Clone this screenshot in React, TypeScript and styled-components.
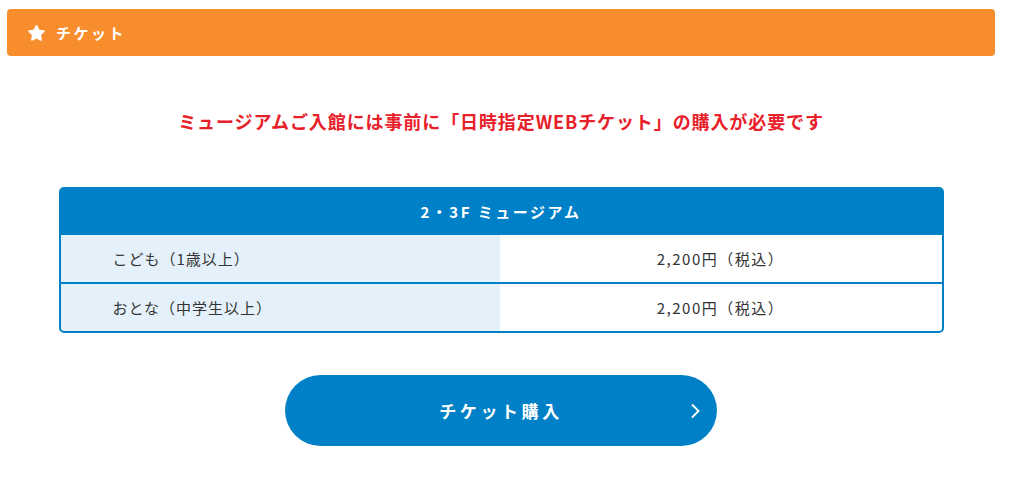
import styled, { createGlobalStyle } from "styled-components";

const GlobalStyle = createGlobalStyle`
  html, body {
    margin: 0;
    padding: 0;
    background: #ffffff;
  }
  body {
    font-family: "Noto Sans CJK JP", "Noto Sans", sans-serif;
    color: #333333;
  }
`;

const Page = styled.div`
  width: 988px;
  margin-left: 7px;
  padding-top: 9px;
  display: flex;
  flex-direction: column;
  align-items: center;
`;

const SectionBar = styled.div`
  box-sizing: border-box;
  width: 100%;
  height: 47px;
  background: #f78d2d;
  border-radius: 4px;
  display: flex;
  align-items: center;
  gap: 10px;
  padding-left: 20px;
  color: #ffffff;
  font-size: 15px;
  font-weight: 700;
  letter-spacing: 2.5px;
`;

const Notice = styled.p`
  margin: 52px 0 0;
  color: #e8202a;
  font-size: 18px;
  font-weight: 700;
  line-height: 26px;
  letter-spacing: 0.9px;
`;

const PriceTable = styled.div`
  box-sizing: border-box;
  width: 885px;
  margin-top: 53px;
  border: 2px solid #0080c6;
  border-radius: 5px;
  overflow: hidden;
  display: flex;
  flex-direction: column;
  gap: 2px;
  background: #0080c6;
`;

const TableHead = styled.div`
  height: 44px;
  display: flex;
  align-items: center;
  justify-content: center;
  color: #ffffff;
  font-size: 15px;
  font-weight: 700;
  letter-spacing: 2.5px;
`;

const TableRow = styled.div`
  display: grid;
  grid-template-columns: 439px 1fr;
  height: 47px;
`;

const Cell = styled.div<{ $label?: boolean }>`
  display: flex;
  align-items: center;
  justify-content: ${(p) => (p.$label ? "flex-start" : "center")};
  padding-left: ${(p) => (p.$label ? "52px" : "0")};
  background: ${(p) => (p.$label ? "#e4f1fa" : "#ffffff")};
  font-size: 15px;
  color: #333333;
  letter-spacing: ${(p) => (p.$label ? "1px" : "1.5px")};
`;

const BuyButton = styled.a`
  box-sizing: border-box;
  position: relative;
  width: 432px;
  height: 71px;
  margin-top: 42px;
  border-radius: 36px;
  background: #0080c6;
  display: flex;
  align-items: center;
  justify-content: center;
  color: #ffffff;
  font-size: 17px;
  font-weight: 700;
  letter-spacing: 3.6px;
  text-decoration: none;
`;

const Chevron = styled.svg`
  position: absolute;
  right: 17px;
  top: 28px;
`;

const rows = [
  { label: "こども（1歳以上）", price: "2,200円（税込）" },
  { label: "おとな（中学生以上）", price: "2,200円（税込）" },
];

function StarIcon() {
  return (
    <svg width="19" height="18" viewBox="0 0 24 23">
      <path
        d="M12 1.2c.5 0 .9.3 1.1.7l2.6 5.4 5.9.8c.9.1 1.3 1.3.6 1.9l-4.3 4.2 1 5.9c.2.9-.8 1.6-1.6 1.2L12 18.5l-5.3 2.8c-.8.4-1.8-.3-1.6-1.2l1-5.9-4.3-4.2c-.7-.6-.3-1.800.6-1.9l5.9-.8 2.600-5.4c.2-.4.6-.7 1.1-.7z"
        fill="#ffffff"
      />
    </svg>
  );
}

export default function App() {
  return (
    <>
      <GlobalStyle />
      <Page>
        <SectionBar>
          <StarIcon />
          <span>チケット</span>
        </SectionBar>
        <Notice>
          ミュージアムご入館には事前に「日時指定WEBチケット」の購入が必要です
        </Notice>
        <PriceTable>
          <TableHead>2・3F ミュージアム</TableHead>
          {rows.map((row) => (
            <TableRow key={row.label}>
              <Cell $label>{row.label}</Cell>
              <Cell>{row.price}</Cell>
            </TableRow>
          ))}
        </PriceTable>
        <BuyButton href="#">
          チケット購入
          <Chevron width="10" height="16" viewBox="0 0 10 16">
            <path
              d="M2 1.5l6.5 6.5L2 14.5"
              fill="none"
              stroke="#ffffff"
              strokeWidth="1.8"
            />
          </Chevron>
        </BuyButton>
      </Page>
    </>
  );
}
